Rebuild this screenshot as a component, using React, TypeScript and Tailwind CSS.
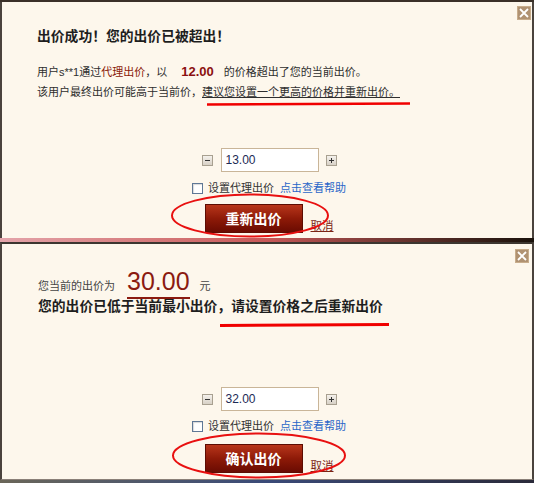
import React from "react";

function CloseBox() {
  return (
    <svg width="14" height="14" viewBox="0 0 14 14">
      <rect x="0" y="0" width="14" height="14" fill="#b09272" />
      <rect x="0.5" y="0.5" width="13" height="13" fill="none" stroke="#c8ad8c" />
      <path d="M3 3 L11 11 M11 3 L3 11" stroke="#ffffff" strokeWidth="1.8" />
    </svg>
  );
}

function StepBtn({ plus }: { plus?: boolean }) {
  return (
    <svg width="11" height="11" viewBox="0 0 11 11">
      <defs>
        <linearGradient id={plus ? "gp" : "gm"} x1="0" y1="0" x2="0" y2="1">
          <stop offset="0" stopColor="#f6f3ee" />
          <stop offset="1" stopColor="#d6cfc4" />
        </linearGradient>
      </defs>
      <rect x="0.5" y="0.5" width="10" height="10" fill={`url(#${plus ? "gp" : "gm"})`} stroke="#a8a090" />
      <path d="M3 5.5 H8" stroke="#333" strokeWidth="1" />
      {plus && <path d="M5.5 3 V8" stroke="#333" strokeWidth="1" />}
    </svg>
  );
}

function InputRow({ value }: { value: string }) {
  return (
    <div className="flex items-center justify-center pl-[4px] gap-[8px]">
      <StepBtn />
      <div className="w-[98px] h-[24px] bg-white border border-[#c9b598] flex items-center pl-[4px] text-[12px] text-[#1b2a55] font-['Liberation_Sans',sans-serif]">
        {value}
      </div>
      <div className="ml-[-1px]">
        <StepBtn plus />
      </div>
    </div>
  );
}

function CheckRow() {
  return (
    <div className="flex items-center justify-center pl-[4px] h-[14px] text-[11px] leading-[14px]">
      <div className="w-[11px] h-[11px] bg-white border border-[#5f7896] shadow-[inset_1px_1px_1px_rgba(0,0,0,0.15)]" />
      <span className="ml-[5px] text-[#333]">设置代理出价</span>
      <span className="ml-[6px] text-[#2a66c8]">点击查看帮助</span>
    </div>
  );
}

function ButtonRow({ label }: { label: string }) {
  return (
    <div className="flex items-center justify-center pl-[4px]">
      <div className="w-[98px] h-[29px] border border-[#5c0c02] bg-gradient-to-b from-[#b8351a] via-[#8e1a08] to-[#6a0b02] flex items-center justify-center text-white font-bold text-[14px] leading-none">
        {label}
      </div>
      <span className="ml-[8px] mt-[14px] text-[11.5px] leading-[14px] text-[#7a2414] underline">取消</span>
    </div>
  );
}

export default function App() {
  return (
    <div className="w-[534px] h-[483px] flex flex-col bg-[#2a2420] overflow-hidden font-['Liberation_Sans','Noto_Sans_CJK_SC',sans-serif]">
      <div className="h-[2px] bg-[#3a3028] shrink-0" />
      {/* Panel 1 */}
      <div className="relative h-[236px] shrink-0 bg-[#fdf7ec] border-l-2 border-r-2 border-[#4a433d] pl-[35px] pt-[27px] text-[#2e2e2e]">
        <div className="absolute top-[4px] right-[1px]">
          <CloseBox />
        </div>
        <div className="text-[13.8px] leading-[16px] font-bold text-[#1e1e1e]">出价成功！您的出价已被超出！</div>
        <div className="mt-[17px] text-[11px] leading-[20px] flex items-baseline">
          <span>用户s**1通过</span>
          <span className="text-[#8b1a0a]">代理出价</span>
          <span>，以</span>
          <span className="ml-[14px] mr-[10px] text-[13px] font-bold text-[#8b1010]">12.00</span>
          <span>的价格超出了您的当前出价。</span>
        </div>
        <div className="text-[11px] leading-[20px]">
          <span>该用户最终出价可能高于当前价，</span>
          <span className="underline">建议您设置一个更高的价格并重新出价。</span>
        </div>
        <div className="ml-[-35px] mt-[46px]">
          <InputRow value="13.00" />
          <div className="mt-[9px]">
            <CheckRow />
          </div>
          <div className="mt-[9px]">
            <ButtonRow label="重新出价" />
          </div>
        </div>
        <svg className="absolute left-[-2px] top-0 pointer-events-none" width="534" height="236">
          <path d="M207 102.5 L410 101.5" stroke="#f00000" strokeWidth="2.6" />
          <ellipse cx="250" cy="213.5" rx="78" ry="21" fill="none" stroke="#e81010" strokeWidth="2" />
        </svg>
      </div>
      {/* strip */}
      <div className="h-[4px] shrink-0 bg-gradient-to-r from-[#e4a4aa] via-[#c85858] to-[#1a120c]" />
      {/* Panel 2 */}
      <div className="relative h-[238px] shrink-0 bg-[#fdf7ec] border-t-2 border-l-2 border-r-2 border-b border-t-[#3c3630] border-x-[#4a433d] border-b-[#8a8078] pl-[36px] pt-[25px] text-[#2e2e2e]">
        <div className="absolute top-[5px] right-[3px]">
          <CloseBox />
        </div>
        <div className="flex items-baseline">
          <span className="text-[11px] text-[#444]">您当前的出价为</span>
          <span className="ml-[12px] inline-block text-[25px] leading-[25px] pb-[3px] border-b-2 border-[#8b1a10] text-[#8b1a10]">30.00</span>
          <span className="ml-[10px] text-[11px] text-[#444]">元</span>
        </div>
        <div className="text-[13.8px] leading-[16px] font-bold text-[#1e1e1e]">
          您的出价已低于当前最小出价，请设置价格之后重新出价
        </div>
        <div className="ml-[-36px] mt-[72px]">
          <InputRow value="32.00" />
          <div className="mt-[8px]">
            <CheckRow />
          </div>
          <div className="mt-[11px]">
            <ButtonRow label="确认出价" />
          </div>
        </div>
        <svg className="absolute left-[-2px] top-[-2px] pointer-events-none" width="534" height="238">
          <path d="M220 83.5 L389 82.5" stroke="#f00000" strokeWidth="3" />
          <ellipse cx="259" cy="213.5" rx="86" ry="22" fill="none" stroke="#e81010" strokeWidth="2" />
        </svg>
      </div>
      <div className="flex-1 bg-gradient-to-r from-[#6a6658] via-[#3a4a78] to-[#2a2a3a]" />
    </div>
  );
}
